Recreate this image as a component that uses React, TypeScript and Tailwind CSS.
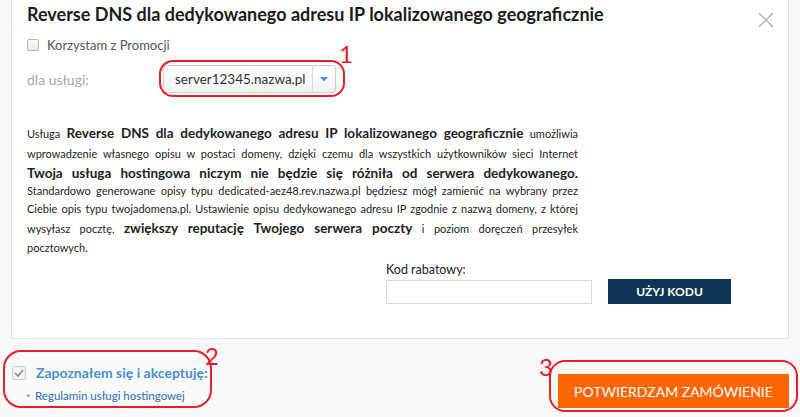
import React from "react";

const font = { fontFamily: "Lato, 'Open Sans', sans-serif" };

const Annotation: React.FC<{ n: string; className: string }> = ({ n, className }) => (
  <span className={`absolute text-[24px] leading-none text-[#e3202a] ${className}`}>{n}</span>
);

const line = "text-justify [text-align-last:justify]";

const App: React.FC = () => {
  return (
    <div className="relative w-[800px] h-[417px] bg-[#fafafa] overflow-hidden" style={font}>
      {/* panel */}
      <div className="ml-[11px] w-[778px] h-[339px] bg-white border-x border-b border-[#e2e2e2] pl-[15px] pr-[16px] pt-[2px] relative">
        <div className="flex items-start justify-between">
          <h2 className="text-[18px] leading-[24px] font-bold text-[#1b1b1b]">
            Reverse DNS dla dedykowanego adresu IP lokalizowanego geograficznie
          </h2>
          <button className="mt-[10px] mr-[-2px] text-[#b5b5b5]">
            <svg width="16" height="16" viewBox="0 0 16 16">
              <path d="M1 1 L15 15 M15 1 L1 15" stroke="currentColor" strokeWidth="1.5" />
            </svg>
          </button>
        </div>

        <label className="mt-[8px] flex items-center gap-[8px] text-[13px] leading-[18px] text-[#555]">
          <span className="w-[12px] h-[12px] rounded-[2px] border border-[#b9b9b9] bg-gradient-to-b from-white to-[#e8e8e8]" />
          Korzystam z Promocji
        </label>

        <div className="mt-[11px] flex items-center h-[28px]">
          <span className="w-[136px] text-[14px] text-[#aaa]">dla usługi:</span>
          <div className="flex h-[28px] w-[173px] rounded-[3px] border border-[#cfcfcf] bg-gradient-to-b from-white to-[#f3f3f3]">
            <span className="flex-1 pl-[11px] text-[13.5px] leading-[26px] text-[#333] whitespace-nowrap">server12345.nazwa.pl</span>
            <span className="w-[23px] border-l border-[#dcdcdc] flex items-center justify-center">
              <svg width="8" height="5" viewBox="0 0 8 5">
                <path d="M0 0 H8 L4 4.5 Z" fill="#4a90d9" />
              </svg>
            </span>
          </div>
        </div>

        <div className="mt-[30px] w-[551px] text-[11px] text-[#1e1e1e]">
          <div className={`h-[20px] leading-[20px] ${line}`}>
            Usługa <b className="text-[13.5px]">Reverse DNS dla dedykowanego adresu IP lokalizowanego geograficznie</b> umożliwia
          </div>
          <div className={`h-[22px] leading-[22px] ${line}`}>
            wprowadzenie własnego opisu w postaci domeny, dzięki czemu dla wszystkich użytkowników sieci Internet
          </div>
          <div className={`h-[17px] leading-[17px] ${line}`}>
            <b className="text-[13.5px]">Twoja usługa hostingowa niczym nie będzie się różniła od serwera dedykowanego.</b>
          </div>
          <div className={`h-[18px] leading-[18px] ${line}`}>
            Standardowo generowane opisy typu dedicated-aez48.rev.nazwa.pl będziesz mógł zamienić na wybrany przez
          </div>
          <div className={`h-[18px] leading-[18px] ${line}`}>
            Ciebie opis typu twojadomena.pl. Ustawienie opisu dedykowanego adresu IP zgodnie z nazwą domeny, z której
          </div>
          <div className={`h-[20px] leading-[20px] ${line}`}>
            wysyłasz pocztę, <b className="text-[13.5px]">zwiększy reputację Twojego serwera poczty</b> i poziom doręczeń przesyłek
          </div>
          <div className="h-[20px] leading-[20px]">pocztowych.</div>
        </div>

        <div className="mt-[3px] flex items-end gap-[16px] pl-[359px]">
          <div className="flex flex-col">
            <span className="text-[12.5px] leading-[18px] text-[#222] mb-[1px]">Kod rabatowy:</span>
            <input className="w-[206px] h-[24px] border border-[#d9d9d9] bg-white outline-none" />
          </div>
          <button className="w-[123px] h-[25px] bg-[#0d3655] text-white text-[12px] font-bold">
            UŻYJ KODU
          </button>
        </div>
      </div>

      {/* footer */}
      <div className="flex justify-between items-start pl-[12px] pr-[11px] mt-[23px]">
        <div className="flex flex-col">
          <label className="flex items-center gap-[10px]">
            <span className="w-[14px] h-[14px] rounded-[2px] border border-[#cfcfcf] bg-[#f3f3f3] flex items-center justify-center">
              <svg width="10" height="8" viewBox="0 0 10 8">
                <path d="M1 4 L4 7 L9 1" stroke="#8a8a8a" strokeWidth="1.6" fill="none" />
              </svg>
            </span>
            <span className="text-[14px] font-bold text-[#4b8ed4]">Zapoznałem się i akceptuję:</span>
          </label>
          <div className="mt-[4px] flex items-center gap-[5px] pl-[15px]">
            <span className="w-[3px] h-[3px] rounded-full bg-[#aaa]" />
            <a className="text-[11.5px] text-[#2c6db4]">Regulamin usługi hostingowej</a>
          </div>
        </div>
        <button className="mt-[12px] w-[231px] h-[34px] bg-[#ff6600] text-white text-[14px]">
          POTWIERDZAM ZAMÓWIENIE
        </button>
      </div>

      {/* annotations */}
      <div className="absolute left-[159px] top-[60px] w-[186px] h-[37px] rounded-[14px] border-2 border-[#e3202a]" />
      <Annotation n="1" className="left-[339px] top-[42px]" />
      <div className="absolute left-[3px] top-[350px] w-[209px] h-[58px] rounded-[18px] border-2 border-[#e3202a]" />
      <Annotation n="2" className="left-[205px] top-[344px]" />
      <div className="absolute left-[549px] top-[360px] w-[249px] h-[52px] rounded-[16px] border-2 border-[#e3202a]" />
      <Annotation n="3" className="left-[539px] top-[355px]" />
    </div>
  );
};

export default App;
